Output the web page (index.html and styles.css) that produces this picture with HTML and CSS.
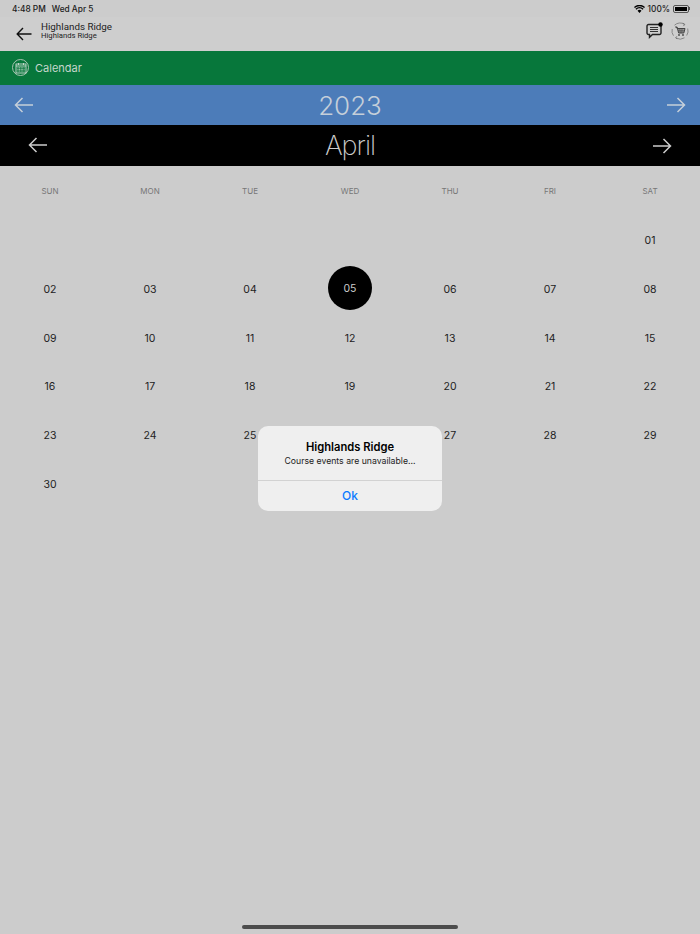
FILE: index.html
```html
<!DOCTYPE html>
<html lang="en">
  <head>
    <meta charset="UTF-8" />
    <meta name="viewport" content="width=device-width, initial-scale=1.0" />
    <title>Calendar</title>
    <link rel="stylesheet" href="styles.css">
  </head>
  <body>
    <div class="screen">
      <div class="status">
        <div class="status-left">
          <span>4:48 PM</span>
          <span>Wed Apr 5</span>
        </div>
        <div class="status-right">
          <svg class="wifi" width="11" height="8" viewBox="0 0 11 8">
            <path d="M5.500 8 3.500 5.800a2.800 2.800 0 0 1 4 0Z" fill="#000" />
            <path d="M1.900 4.200a5.200 5.200 0 0 1 7.200 0" fill="none" stroke="#000" stroke-width="1.400" />
            <path d="M.4 2.500a7.500 7.500 0 0 1 10.200 0" fill="none" stroke="#000" stroke-width="1.400" />
          </svg>
          <span>100%</span>
          <span class="battery"><span class="battery-fill"></span></span>
          <span class="battery-nub"></span>
        </div>
      </div>

      <header class="topbar">
        <svg class="back" width="16" height="14" viewBox="0 0 16 14">
          <path d="M15.500 7H1.200M7 1 1.200 7 7 13" fill="none" stroke="#111" stroke-width="1.400" />
        </svg>
        <div class="titles">
          <div class="title">Highlands Ridge</div>
          <div class="subtitle">Highlands Ridge</div>
        </div>
        <div class="actions">
          <svg width="17" height="17" viewBox="0 0 17 17">
            <path d="M2.500 2.500h11a1.500 1.500 0 0 1 1.500 1.500v7a1.500 1.500 0 0 1-1.500 1.500H6.500l-3 2.800v-2.800H2.500A1.500 1.500 0 0 1 1 11V4a1.500 1.500 0 0 1 1.500-1.500Z" fill="none" stroke="#222" stroke-width="1.400" />
            <path d="M4 5.500h8M4 7.500h8M4 9.500h8" stroke="#333" stroke-width="1" />
            <circle cx="14.500" cy="2.500" r="2.200" fill="#000" />
          </svg>
          <svg width="18" height="18" viewBox="0 0 18 18">
            <path d="M13.500 2.300A8 8 0 0 0 3.500 3.200M1.200 7a8 8 0 0 0 1.300 6.700M5 16a8 8 0 0 0 8.500-.2M15.700 13.500a8 8 0 0 0 1-7" fill="none" stroke="#888" stroke-width="1" />
            <path d="M11.800 1.200l2 1.200-1.400 1.700M6.200 16.800l-1.600-1 1.300-1.500" fill="none" stroke="#666" stroke-width=".8" />
            <path d="M4.500 5h1.600l1.500 6h5.200l1.200-4.500H6.500Z" fill="#999" stroke="#444" stroke-width="1" />
            <path d="M7 8.800h6.300M8.800 6.500 9.200 11M11 6.500 10.800 11" stroke="#444" stroke-width=".6" />
            <circle cx="8" cy="13" r=".9" fill="#444" />
            <circle cx="12" cy="13" r=".9" fill="#444" />
          </svg>
        </div>
      </header>

      <div class="section">
        <span class="section-icon">
          <svg width="12" height="12" viewBox="0 0 12 12">
            <rect x="1" y="2" width="10" height="9" fill="none" stroke="#cfdcd3" stroke-width=".9" />
            <path d="M1 4h10M3.500 1v2M8.500 1v2" stroke="#cfdcd3" stroke-width=".9" />
            <path d="M2.500 5.800h7M2.500 7.400h7M2.500 9h7" stroke="#cfdcd3" stroke-width=".9" stroke-dasharray="1 .6" />
          </svg>
        </span>
        <span>Calendar</span>
      </div>

      <div class="year">
        <svg width="20" height="16" viewBox="0 0 20 16">
          <path d="M19 8H1.500M8.500 1 1.500 8l7 7" fill="none" stroke="#c5cfd9" stroke-width="1.500" />
        </svg>
        <span>2023</span>
        <svg width="20" height="16" viewBox="0 0 20 16">
          <path d="M1 8h17.500M11.500 1l7 7-7 7" fill="none" stroke="#c5cfd9" stroke-width="1.500" />
        </svg>
      </div>

      <div class="month">
        <svg class="month-prev" width="20" height="16" viewBox="0 0 20 16">
          <path d="M19 8H1.500M8.500 1 1.500 8l7 7" fill="none" stroke="#ccc" stroke-width="1.500" />
        </svg>
        <span>April</span>
        <svg width="20" height="16" viewBox="0 0 20 16">
          <path d="M1 8h17.500M11.500 1l7 7-7 7" fill="none" stroke="#ccc" stroke-width="1.500" />
        </svg>
      </div>

      <div class="weekdays">
        <div>SUN</div><div>MON</div><div>TUE</div><div>WED</div><div>THU</div><div>FRI</div><div>SAT</div>
      </div>

      <div class="days">
        <div></div><div></div><div></div><div></div><div></div><div></div><div>01</div>
        <div>02</div><div>03</div><div>04</div><div><span class="today">05</span></div><div>06</div><div>07</div><div>08</div>
        <div>09</div><div>10</div><div>11</div><div>12</div><div>13</div><div>14</div><div>15</div>
        <div>16</div><div>17</div><div>18</div><div>19</div><div>20</div><div>21</div><div>22</div>
        <div>23</div><div>24</div><div>25</div><div>26</div><div>27</div><div>28</div><div>29</div>
        <div>30</div>
      </div>

      <div class="alert">
        <div class="alert-body">
          <div class="alert-title">Highlands Ridge</div>
          <div class="alert-text">Course events are unavailable...</div>
        </div>
        <div class="alert-btn">Ok</div>
      </div>

      <div class="home-bar"></div>
    </div>
  </body>
</html>
```

FILE: styles.css
```css
* {
  margin: 0;
  padding: 0;
  box-sizing: border-box;
}

body {
  font-family: "Inter", "Liberation Sans", sans-serif;
  background: #cccccc;
  color: #111;
}

.screen {
  position: relative;
  width: 700px;
  height: 934px;
  overflow: hidden;
}

.status {
  height: 17px;
  display: flex;
  justify-content: space-between;
  align-items: center;
  padding: 0 10px 0 12px;
  font-size: 8.300px;
  font-weight: 500;
  color: #1a1a1a;
}

.status-left {
  display: flex;
  gap: 6px;
}

.status-right {
  display: flex;
  align-items: center;
  gap: 3px;
}

.battery {
  width: 16px;
  height: 8px;
  padding: 1px;
  border: 1px solid #555;
  border-radius: 2px;
}

.battery-fill {
  display: block;
  height: 100%;
  background: #000;
}

.battery-nub {
  width: 1px;
  height: 3px;
  margin-left: -3px;
  background: #555;
}

.topbar {
  height: 34px;
  display: flex;
  align-items: center;
  padding-left: 16px;
  background: #cecece;
}

.back {
  margin-right: 9px;
}

.titles {
  margin-top: -6px;
}

.title {
  font-family: "Roboto", sans-serif;
  font-size: 9.800px;
  line-height: 10px;
  color: #222;
}

.subtitle {
  font-family: "Roboto", sans-serif;
  font-size: 7.700px;
  line-height: 8px;
  color: #222;
}

.actions {
  display: flex;
  gap: 8px;
  margin-left: auto;
  margin-top: -7px;
  padding-right: 11px;
}

.section {
  height: 34px;
  display: flex;
  align-items: center;
  gap: 6px;
  padding: 0 0 1px 12px;
  background: #07773b;
  color: #c5d6cb;
  font-size: 11px;
}

.section-icon {
  width: 17px;
  height: 17px;
  display: flex;
  justify-content: center;
  align-items: center;
  border: 1px solid #a9c4b2;
  border-radius: 50%;
}

.year {
  height: 40px;
  display: flex;
  justify-content: space-between;
  align-items: center;
  padding: 0 14px;
  background: #4c7cb9;
  color: #c5cfd9;
  font-size: 26px;
  font-weight: 300;
}

.month {
  height: 41px;
  display: flex;
  justify-content: space-between;
  align-items: center;
  padding: 0 28px;
  background: #000;
  color: #ccc;
  font-size: 27px;
  font-weight: 200;
  letter-spacing: -1px;
}

.month-prev {
  margin-top: -2px;
}

.weekdays,
.days {
  display: grid;
  grid-template-columns: repeat(7, 100px);
  text-align: center;
}

.weekdays {
  height: 50px;
  padding-top: 20px;
  font-size: 8px;
  line-height: 10px;
  color: #777;
}

.days {
  grid-auto-rows: 48.850px;
  font-size: 10.500px;
  color: #222;
}

.days > div {
  display: flex;
  justify-content: center;
  align-items: center;
}

.today {
  width: 44px;
  height: 44px;
  margin-top: -2px;
  padding-top: 1px;
  display: flex;
  justify-content: center;
  align-items: center;
  border-radius: 50%;
  background: #000;
  color: #ccc;
}

.alert {
  position: absolute;
  left: 258px;
  top: 426px;
  width: 184px;
  height: 85px;
  border-radius: 10px;
  background: #efefef;
  text-align: center;
}

.alert-body {
  height: 55px;
  padding-top: 14px;
  border-bottom: 1px solid #d2d2d2;
}

.alert-title {
  font-size: 11.200px;
  line-height: 14px;
  font-weight: 600;
  color: #000;
}

.alert-text {
  font-size: 8.700px;
  line-height: 14px;
  color: #222;
}

.alert-btn {
  height: 30px;
  line-height: 30px;
  font-size: 12px;
  font-weight: 500;
  color: #0a7aff;
}

.home-bar {
  position: absolute;
  left: 242px;
  bottom: 5px;
  width: 216px;
  height: 4px;
  border-radius: 2px;
  background: #4c4c4c;
}
```
